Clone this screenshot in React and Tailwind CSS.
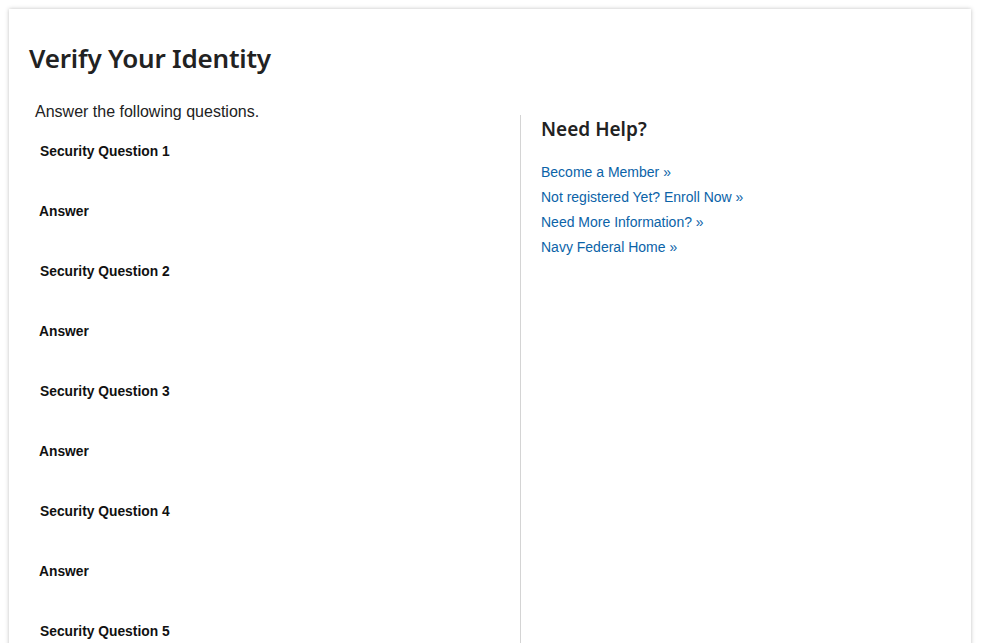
import React from "react";

const questions = [1, 2, 3, 4, 5];

const helpLinks = [
  "Become a Member »",
  "Not registered Yet? Enroll Now »",
  "Need More Information? »",
  "Navy Federal Home »",
];

export default function App() {
  return (
    <div className="h-[643px] overflow-hidden bg-white pt-[9px] pl-[9px]">
      <div className="w-[962px] min-h-[700px] bg-white shadow-[0_0_4px_rgba(0,0,0,0.25)] px-5 pt-[31px] font-['Liberation_Sans',Arial,sans-serif] text-[#222]">
        <h1 className="font-['Noto_Sans',sans-serif] text-[26px] font-semibold leading-[36px] text-[#222] tracking-[-0.2px]">
          Verify Your Identity
        </h1>

        <div className="flex mt-[24px]">
          {/* left: questions */}
          <div className="w-[491px] pl-[6px]">
            <p className="text-[16px] leading-[24px] text-[#222]">
              Answer the following questions.
            </p>
            <div className="pl-[5px] mt-[13px]">
              {questions.map((n) => (
                <div key={n}>
                  <div className="h-[60px] pt-[6px] text-[13.8px] font-bold leading-[18px] text-[#111]">
                    Security Question {n}
                  </div>
                  <div className="h-[60px] pt-[6px] text-[13.8px] font-bold leading-[18px] text-[#111] -ml-px">
                    Answer
                  </div>
                </div>
              ))}
            </div>
          </div>

          {/* right: help */}
          <div className="flex-1 border-l border-[#d4d4d4] mt-[15px] pl-5">
            <h2 className="font-['Noto_Sans',sans-serif] text-[19px] font-semibold leading-[28px] text-[#222]">
              Need Help?
            </h2>
            <ul className="mt-[20px] space-y-[7px]">
              {helpLinks.map((l) => (
                <li key={l} className="leading-[18px]">
                  <a href="#" className="text-[14px] leading-[18px] text-[#0b63a8]">
                    {l}
                  </a>
                </li>
              ))}
            </ul>
          </div>
        </div>
      </div>
    </div>
  );
}
